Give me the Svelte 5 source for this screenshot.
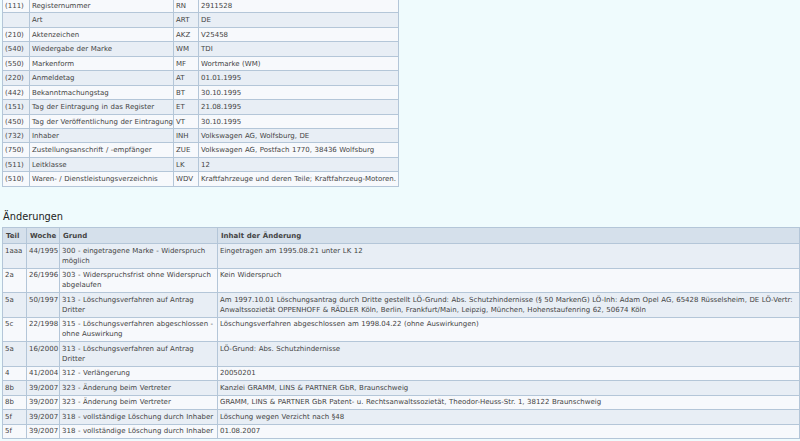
<script>
	const stamm = [
		['(111)', 'Registernummer', 'RN', '2911528'],
		['', 'Art', 'ART', 'DE'],
		['(210)', 'Aktenzeichen', 'AKZ', 'V25458'],
		['(540)', 'Wiedergabe der Marke', 'WM', 'TDI'],
		['(550)', 'Markenform', 'MF', 'Wortmarke (WM)'],
		['(220)', 'Anmeldetag', 'AT', '01.01.1995'],
		['(442)', 'Bekanntmachungstag', 'BT', '30.10.1995'],
		['(151)', 'Tag der Eintragung in das Register', 'ET', '21.08.1995'],
		['(450)', 'Tag der Veröffentlichung der Eintragung', 'VT', '30.10.1995'],
		['(732)', 'Inhaber', 'INH', 'Volkswagen AG, Wolfsburg, DE'],
		['(750)', 'Zustellungsanschrift / -empfänger', 'ZUE', 'Volkswagen AG, Postfach 1770, 38436 Wolfsburg'],
		['(511)', 'Leitklasse', 'LK', '12'],
		['(510)', 'Waren- / Dienstleistungsverzeichnis', 'WDV', 'Kraftfahrzeuge und deren Teile; Kraftfahrzeug-Motoren.']
	];

	const aenderungen = [
		['1aaa', '44/1995', '300 - eingetragene Marke - Widerspruch möglich', 'Eingetragen am 1995.08.21 unter LK 12'],
		['2a', '26/1996', '303 - Widerspruchsfrist ohne Widerspruch abgelaufen', 'Kein Widerspruch'],
		['5a', '50/1997', '313 - Löschungsverfahren auf Antrag Dritter', 'Am 1997.10.01 Löschungsantrag durch Dritte gestellt LÖ-Grund: Abs. Schutzhindernisse (§ 50 MarkenG) LÖ-Inh: Adam Opel AG, 65428 Rüsselsheim, DE LÖ-Vertr: Anwaltssozietät OPPENHOFF & RÄDLER Köln, Berlin, Frankfurt/Main, Leipzig, München, Hohenstaufenring 62, 50674 Köln'],
		['5c', '22/1998', '315 - Löschungsverfahren abgeschlossen - ohne Auswirkung', 'Löschungsverfahren abgeschlossen am 1998.04.22 (ohne Auswirkungen)'],
		['5a', '16/2000', '313 - Löschungsverfahren auf Antrag Dritter', 'LÖ-Grund: Abs. Schutzhindernisse'],
		['4', '41/2004', '312 - Verlängerung', '20050201'],
		['8b', '39/2007', '323 - Änderung beim Vertreter', 'Kanzlei GRAMM, LINS & PARTNER GbR, Braunschweig'],
		['8b', '39/2007', '323 - Änderung beim Vertreter', 'GRAMM, LINS & PARTNER GbR Patent- u. Rechtsanwaltssozietät, Theodor-Heuss-Str. 1, 38122 Braunschweig'],
		['5f', '39/2007', '318 - vollständige Löschung durch Inhaber', 'Löschung wegen Verzicht nach §48'],
		['5f', '39/2007', '318 - vollständige Löschung durch Inhaber', '01.08.2007']
	];
</script>

<main>
	<table class="stamm">
		<colgroup>
			<col style="width: 27px" />
			<col style="width: 144px" />
			<col style="width: 25px" />
			<col />
		</colgroup>
		<tbody>
			{#each stamm as row}
				<tr>
					{#each row as cell}
						<td>{cell}</td>
					{/each}
				</tr>
			{/each}
		</tbody>
	</table>

	<h2>Änderungen</h2>

	<table class="changes">
		<colgroup>
			<col style="width: 24px" />
			<col style="width: 33px" />
			<col style="width: 158px" />
			<col />
		</colgroup>
		<thead>
			<tr>
				<th>Teil</th>
				<th>Woche</th>
				<th>Grund</th>
				<th>Inhalt der Änderung</th>
			</tr>
		</thead>
		<tbody>
			{#each aenderungen as row}
				<tr>
					{#each row as cell}
						<td>{cell}</td>
					{/each}
				</tr>
			{/each}
		</tbody>
	</table>
</main>

<style>
	:global(body) {
		background: #effbfd;
		font-family: 'DejaVu Sans', Verdana, sans-serif;
		font-size: 7px;
		word-spacing: 0.3px;
		color: #444;
	}

	main {
		height: 441px;
		overflow: hidden;
		padding-left: 2px;
	}

	table {
		border-collapse: collapse;
		table-layout: fixed;
	}

	td,
	th {
		border: 1px solid #b4c6d8;
		padding: 0 2px;
		vertical-align: top;
		text-align: left;
		line-height: 10.2px;
	}

	.stamm {
		width: 397px;
		margin-top: -2px;
	}

	.stamm td {
		height: 14.45px;
		padding-top: 2px;
		box-sizing: border-box;
		white-space: nowrap;
	}

	.stamm tr:nth-child(even) td,
	.changes tbody tr:nth-child(odd) td {
		background: #e8eef5;
	}

	.stamm tr:nth-child(odd) td,
	.changes tbody tr:nth-child(even) td {
		background: #f7f9fc;
	}

	h2 {
		margin: 23px 0 4px 1px;
		font-size: 9.8px;
		line-height: 13px;
		font-weight: normal;
		color: #222;
	}

	.changes {
		width: 798px;
	}

	.changes th {
		background: #d5e0eb;
		height: 16.5px;
		box-sizing: border-box;
		font-weight: bold;
		vertical-align: middle;
		padding: 1px 2px 0 3px;
	}

	.changes td {
		height: 14.5px;
		padding-top: 1.5px;
		padding-bottom: 1.6px;
		box-sizing: border-box;
	}
</style>
